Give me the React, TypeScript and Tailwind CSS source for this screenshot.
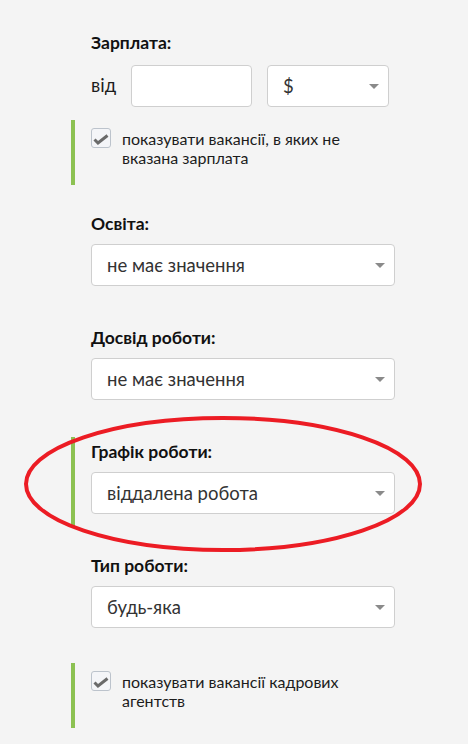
import React from 'react';

function Arrow() {
  return (
    <svg width="10" height="5" viewBox="0 0 10 5" className="shrink-0">
      <path d="M0 0h10L5 5z" fill="#8a8a8a" />
    </svg>
  );
}

function Select({ value, className = '' }: { value: string; className?: string }) {
  return (
    <div
      className={`flex h-[42px] items-center justify-between rounded-[4px] border border-[#cfcfcf] bg-white pl-[15px] pr-[9px] ${className}`}
    >
      <span className="text-[18.5px] leading-none text-[#333]">{value}</span>
      <Arrow />
    </div>
  );
}

function Label({ children }: { children: React.ReactNode }) {
  return <p className="text-[17.5px] font-bold leading-[20px] text-[#111]">{children}</p>;
}

function Check({ lines, className = '' }: { lines: string; className?: string }) {
  return (
    <div className={`flex h-[65px] items-start border-l-4 border-[#8cc152] pl-4 pt-[8px] ${className}`}>
      <span className="flex h-5 w-5 shrink-0 items-center justify-center rounded-[3px] border border-[#bcc3cc] bg-[#f4f5f8]">
        <svg width="18" height="18" viewBox="0 0 18 18">
          <path d="M2.5 10.5L6 14L15.5 6.5" fill="none" stroke="#6a6a6a" strokeWidth="3" strokeLinejoin="miter" />
        </svg>
      </span>
      <p className="ml-[11px] mt-[1px] text-[16px] leading-[19px] text-[#1c1c1c]">{lines}</p>
    </div>
  );
}

function Section({ label, value, active = false }: { label: string; value: string; active?: boolean }) {
  return (
    <div className={`mt-6 border-l-4 pb-[13px] pl-4 pt-[5px] ${active ? 'border-[#8cc152]' : 'border-transparent'}`}>
      <Label>{label}</Label>
      <Select value={value} className="mt-[10px] w-[304px]" />
    </div>
  );
}

export default function App() {
  return (
    <div className="relative h-[744px] w-[468px] overflow-hidden bg-[#f4f4f4] font-['Lato','Noto_Sans',sans-serif]">
      <div className="ml-[71px] w-[324px]">
        {/* Salary */}
        <div className="pl-5 pt-[33px]">
          <Label>Зарплата:</Label>
          <div className="mt-3 flex items-center">
            <span className="w-[40px] text-[18.5px] text-[#1c1c1c]">від</span>
            <div className="h-[42px] w-[121px] rounded-[4px] border border-[#cfcfcf] bg-white" />
            <Select value="$" className="ml-[15px] w-[122px]" />
          </div>
        </div>

        <Check className="mt-[13px]" lines="показувати вакансії, в яких не вказана зарплата" />

        <Section label="Освіта:" value="не має значення" />
        <Section label="Досвід роботи:" value="не має значення" />
        <Section label="Графік роботи:" value="віддалена робота" active />
        <Section label="Тип роботи:" value="будь-яка" />

        <Check className="mt-[22px] h-[64px]" lines="показувати вакансії кадрових агентств" />
      </div>

      {/* red annotation */}
      <svg className="pointer-events-none absolute left-0 top-0" width="468" height="744">
        <ellipse cx="223" cy="484" rx="197" ry="66" fill="none" stroke="#ec1c24" strokeWidth="4" />
      </svg>
    </div>
  );
}
